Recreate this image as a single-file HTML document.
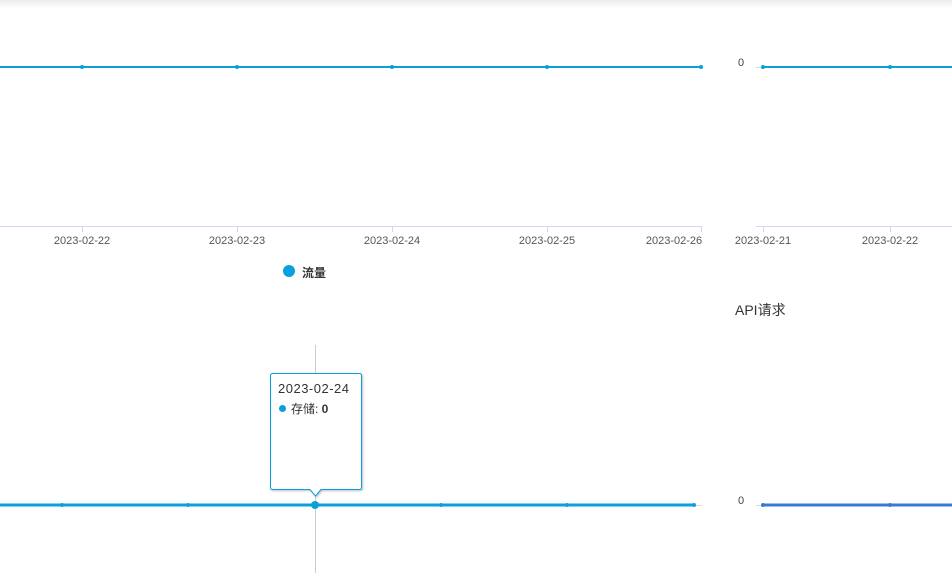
<!DOCTYPE html><html><head><meta charset="utf-8"><style>
body{margin:0;width:952px;height:573px;overflow:hidden;background:#fff;font-family:"Liberation Sans","Noto Sans CJK SC",sans-serif;position:relative}
.a{position:absolute}
.t{font-size:11px;color:#555;transform:translateX(-50%)}
</style></head><body>
<div class="a" style="left:0;top:0;width:952px;height:8px;background:linear-gradient(#ececec,#fff)"></div>
<svg class="a" style="left:0;top:0" width="952" height="573">
<g stroke="#d0d8ea" stroke-width="1">
<line x1="0" y1="226.5" x2="702" y2="226.5"/>
<line x1="82.5" y1="226" x2="82.5" y2="232"/><line x1="237.5" y1="226" x2="237.5" y2="232"/><line x1="392.5" y1="226" x2="392.5" y2="232"/><line x1="547.5" y1="226" x2="547.5" y2="232"/><line x1="701.5" y1="226" x2="701.5" y2="232"/>
<line x1="756" y1="226.5" x2="952" y2="226.5"/>
<line x1="763.5" y1="226" x2="763.5" y2="232"/><line x1="890.5" y1="226" x2="890.5" y2="232"/>
<line x1="756" y1="67.5" x2="763" y2="67.5"/>
<line x1="694" y1="505.5" x2="702" y2="505.5"/>
<line x1="756" y1="505.5" x2="763" y2="505.5"/>
</g>
<line x1="315.5" y1="345" x2="315.5" y2="573" stroke="#ccc"/>
<g stroke="#0aa0dc" stroke-width="2"><line x1="0" y1="67" x2="702" y2="67"/><line x1="763" y1="67" x2="952" y2="67"/><line x1="0" y1="505" x2="694" y2="505" stroke-width="3"/></g>
<g fill="#0aa0dc"><circle cx="82" cy="67" r="2"/><circle cx="237" cy="67" r="2"/><circle cx="392" cy="67" r="2"/><circle cx="547" cy="67" r="2"/><circle cx="701" cy="67" r="2"/><circle cx="763" cy="67" r="2"/><circle cx="890" cy="67" r="2"/>
<circle cx="62" cy="505" r="2"/><circle cx="188" cy="505" r="2"/><circle cx="441" cy="505" r="2"/><circle cx="567" cy="505" r="2"/><circle cx="694" cy="505" r="2"/><circle cx="289" cy="271" r="6"/></g>
<line x1="763" y1="505" x2="952" y2="505" stroke="#3a78d6" stroke-width="3"/>
<circle cx="890" cy="505" r="2" fill="#3a78d6"/><circle cx="763" cy="505" r="2" fill="#3a78d6"/>
<g filter="drop-shadow(1px 1px 1px rgba(0,0,0,.25))"><path d="M273.5 373.5 H359.5 Q361.5 373.5 361.5 375.5 V487.5 Q361.5 489.5 359.5 489.5 H321 L315.5 496 L310 489.5 H272.5 Q270.5 489.5 270.5 487.5 V375.5 Q270.5 373.5 273.5 373.5Z" fill="#fff" stroke="#0aa0dc"/></g>
<circle cx="315" cy="505" r="4" fill="#0aa0dc"/>
</svg>
<div class="a t" style="left:82px;top:235px">2023-02-22</div>
<div class="a t" style="left:237px;top:235px">2023-02-23</div>
<div class="a t" style="left:392px;top:235px">2023-02-24</div>
<div class="a t" style="left:547px;top:235px">2023-02-25</div>
<div class="a t" style="left:674px;top:235px">2023-02-26</div>
<div class="a t" style="left:763px;top:235px">2023-02-21</div>
<div class="a t" style="left:890px;top:235px">2023-02-22</div>
<div class="a" style="left:738px;top:57px;font-size:11px;color:#444">0</div>
<div class="a" style="left:738px;top:495px;font-size:11px;color:#444">0</div>
<div class="a" style="left:302px;top:264px;font-size:12px;font-weight:bold;color:#333">流量</div>
<div class="a" style="left:735px;top:300px;font-size:14px;color:#333">API请求</div>
<div class="a" style="left:278px;top:381px;font-size:13px;color:#333;letter-spacing:.5px">2023-02-24</div>
<div class="a" style="left:279px;top:400px;font-size:12px;color:#333"><span style="display:inline-block;width:7px;height:7px;border-radius:50%;background:#0aa0dc;margin-right:5px;vertical-align:1px"></span>存储: <b>0</b></div>
</body></html>
